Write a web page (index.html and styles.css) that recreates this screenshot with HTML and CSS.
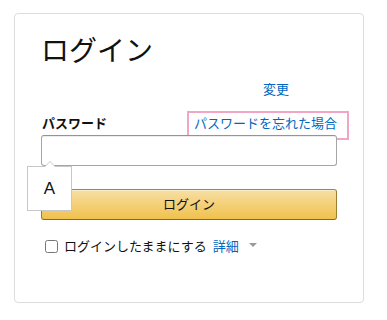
FILE: index.html
```html
<!DOCTYPE html>
<html lang="ja">
<head>
  <meta charset="UTF-8">
  <meta name="viewport" content="width=device-width, initial-scale=1.0">
  <title>ログイン</title>
  <link rel="stylesheet" href="styles.css">
</head>
<body>

  <div class="card">
    <h1>ログイン</h1>

    <div class="account-row">
      <a class="link" href="#">変更</a>
    </div>

    <div class="label-row">
      <label class="label" for="password">パスワード</label>
      <a class="link forgot" href="#">パスワードを忘れた場合</a>
    </div>

    <div class="field">
      <input class="input" type="password" id="password">
      <div class="hint">A</div>
    </div>

    <button class="submit">ログイン</button>

    <div class="remember">
      <label><input type="checkbox" class="check"> ログインしたままにする</label>
      <a class="link" href="#">詳細</a>
      <span class="caret"></span>
    </div>
  </div>

</body>
</html>
```

FILE: styles.css
```css
body {
  margin: 0;
  padding: 13px 0 0 14px;
  background: #fff;
  color: #111;
  font-family: Arial, "Liberation Sans", "Noto Sans CJK JP", sans-serif;
  font-size: 13px;
  line-height: 19px;
}

.card {
  width: 296px;
  padding: 20px 26px 46px;
  border: 1px solid #ddd;
  border-radius: 4px;
}

h1 {
  margin: 0 0 10px;
  font-size: 28px;
  font-weight: 400;
  line-height: 36px;
}

.link {
  color: #0066c0;
  text-decoration: none;
}

.account-row {
  padding-left: 222px;
  margin-bottom: 15px;
}

.label-row {
  display: flex;
  justify-content: space-between;
  align-items: flex-end;
  padding-bottom: 2px;
}

.label {
  font-weight: 700;
  padding-left: 1px;
}

.forgot {
  position: relative;
}

.forgot::after {
  content: "";
  position: absolute;
  left: -7px;
  right: -12px;
  top: -3px;
  bottom: -7px;
  border: 2px solid #f2a6c6;
}

.field {
  position: relative;
  margin-bottom: 23px;
}

.input {
  display: block;
  box-sizing: border-box;
  width: 100%;
  height: 31px;
  margin: 0;
  border: 1px solid #a6a6a6;
  border-top-color: #949494;
  border-radius: 3px;
  box-shadow: 0 1px 0 rgba(255,255,255,.5), 0 1px 0 rgba(0,0,0,.07) inset;
}

.hint {
  position: absolute;
  left: -14px;
  top: 31px;
  width: 43px;
  height: 43px;
  border: 1px solid #c8c8c8;
  background: #fff;
  font-size: 17px;
  line-height: 43px;
  text-align: center;
  z-index: 2;
}

.hint::before,
.hint::after {
  content: "";
  position: absolute;
  left: 16px;
  border: 6px solid transparent;
  border-top: none;
}

.hint::before {
  top: -6px;
  border-bottom: 6px solid #c8c8c8;
}

.hint::after {
  top: -5px;
  border-bottom: 6px solid #fff;
}

.submit {
  display: block;
  width: 100%;
  height: 31px;
  margin: 0 0 17px;
  padding: 0;
  font: inherit;
  color: #111;
  border: 1px solid;
  border-color: #a88734 #9c7e31 #846a29;
  border-radius: 3px;
  background: linear-gradient(to bottom, #f7dfa5, #f0c14b);
  box-shadow: 0 1px 0 rgba(255,255,255,.4) inset;
}

.remember {
  display: flex;
  align-items: center;
  padding-left: 4px;
}

.remember label {
  display: flex;
  align-items: center;
  margin-right: 6px;
}

.check {
  width: 13px;
  height: 13px;
  margin: 0 6px 0 0;
}

.caret {
  margin-left: 10px;
  margin-bottom: 3px;
  border-top: 4px solid #999;
  border-left: 4px solid transparent;
  border-right: 4px solid transparent;
}
```
